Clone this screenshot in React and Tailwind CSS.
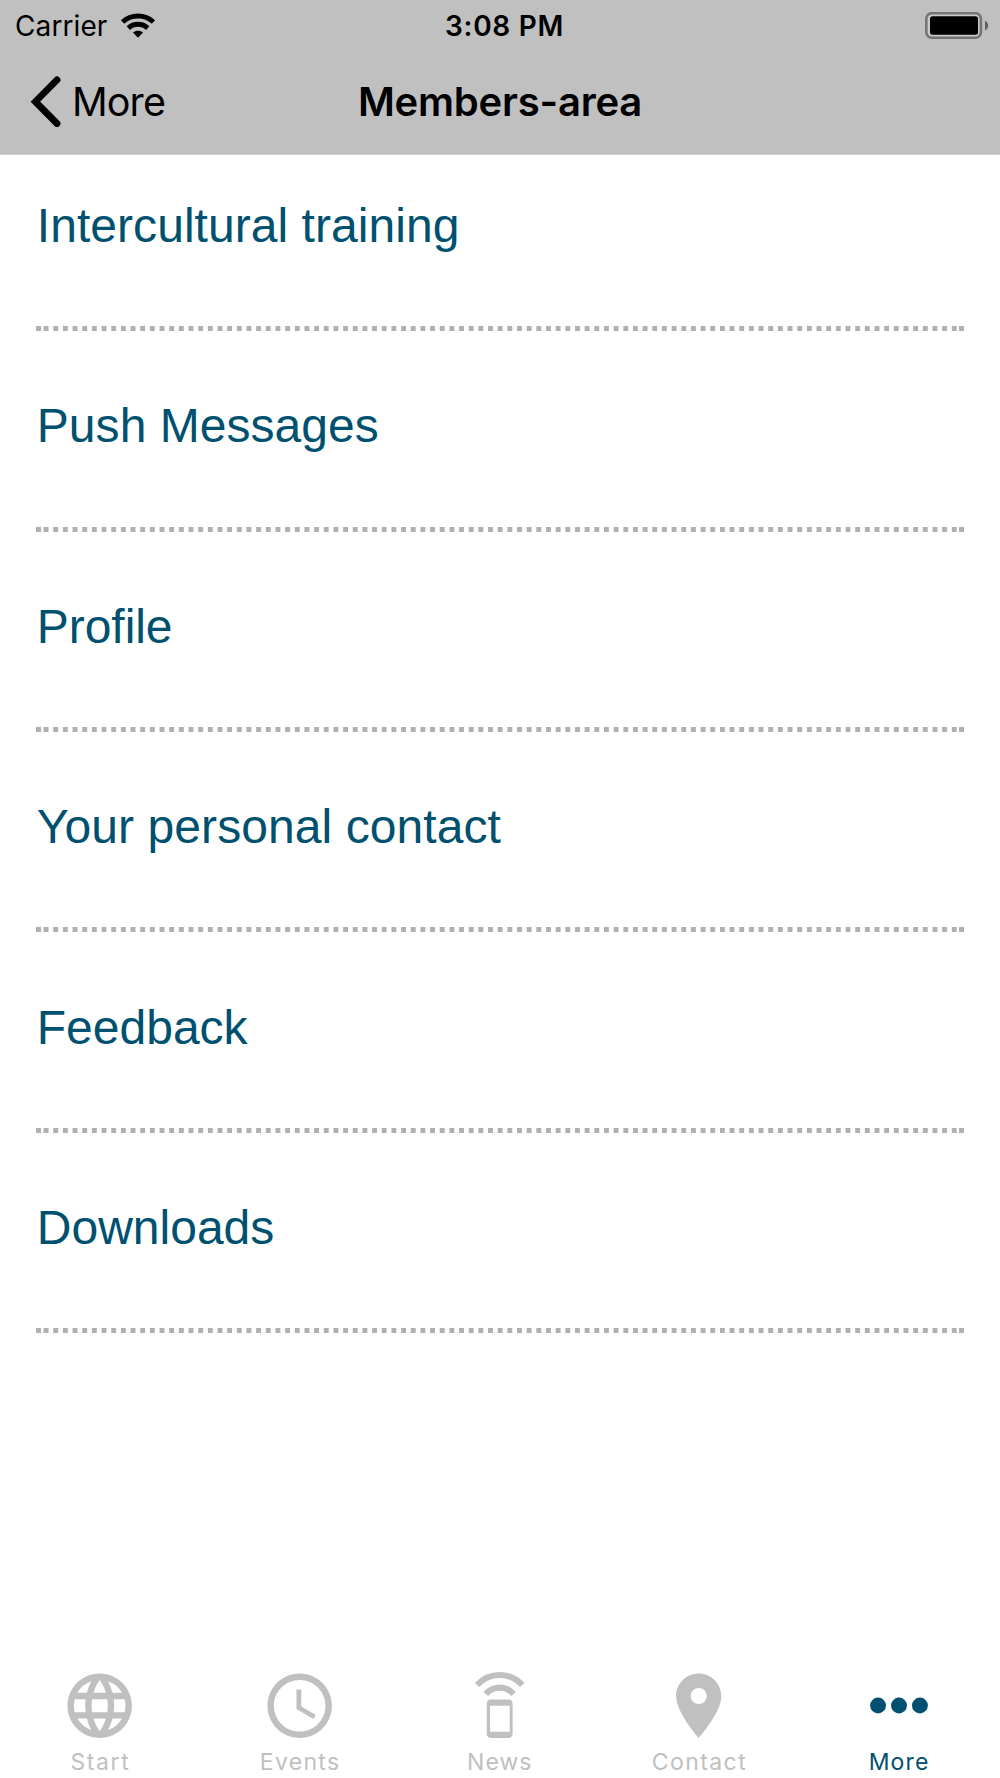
import React from "react";
import { MdLanguage, MdSchedule, MdPlace } from "react-icons/md";

const ITEMS = [
  { label: "Intercultural training", tracking: "tracking-[0.05px]" },
  { label: "Push Messages", tracking: "tracking-[0.04px]" },
  { label: "Profile", tracking: "tracking-[-0.05px]" },
  { label: "Your personal contact", tracking: "tracking-[0.08px]" },
  { label: "Feedback", tracking: "tracking-normal" },
  { label: "Downloads", tracking: "tracking-normal" },
];

const MoreDots = ({ className }) => (
  <svg className={className} viewBox="0 0 78 78" fill="currentColor">
    <circle cx="18.2" cy="38.8" r="8" />
    <circle cx="39.3" cy="38.8" r="8" />
    <circle cx="60.4" cy="38.8" r="8" />
  </svg>
);

const PhoneSignal = ({ className }) => (
  <svg className={className} viewBox="0 0 24 24" fill="none" stroke="currentColor" strokeWidth="1.9">
    <path d="M5 5.6A9.45 9.45 0 0 1 19 5.6" />
    <path d="M7.7 8.4A5.6 5.6 0 0 1 16.3 8.4" />
    <path
      d="M9.2 10.1H14.8C15.5 10.1 16 10.6 16 11.3V20.8C16 21.5 15.5 22 14.8 22H9.2C8.5 22 8 21.5 8 20.8V11.3C8 10.6 8.5 10.1 9.2 10.1ZM9 12V20.1H15.1V12Z"
      fill="currentColor"
      fillRule="evenodd"
      stroke="none"
    />
  </svg>
);

const TABS = [
  { label: "Start", Icon: MdLanguage, tracking: "tracking-[1.6px]" },
  { label: "Events", Icon: MdSchedule, tracking: "tracking-[1.3px]" },
  { label: "News", Icon: PhoneSignal, tracking: "tracking-[1px]" },
  { label: "Contact", Icon: MdPlace, tracking: "tracking-[1.4px]" },
  { label: "More", Icon: MoreDots, tracking: "tracking-[1.2px]", active: true },
];

const Wifi = () => (
  <svg className="h-[26px] w-[36px]" viewBox="0 0 36 26" fill="none" stroke="#000" strokeWidth="4.9">
    <path d="M2.6 9C11 1 25 1 33.4 9" />
    <path d="M8.3 15.1C13.8 10 22.2 10 27.7 15.1" />
    <path d="M13 19.6C15.8 17 20.2 17 23 19.6L18 24.7Z" fill="#000" stroke="none" />
  </svg>
);

const Battery = () => (
  <svg className="h-[28px] w-[64px]" viewBox="0 0 64 28">
    <rect x="1.3" y="1.2" width="54.6" height="24.6" rx="5.5" fill="#c9c9c9" stroke="#747474" strokeWidth="2.6" />
    <rect x="5" y="4.3" width="48" height="18.4" rx="2.5" fill="#000" />
    <path d="M60 8.7C64.2 10.5 64.2 16.5 60 18.3Z" fill="#606060" />
  </svg>
);

const Divider = () => (
  <svg className="block h-[5px] w-[928px]" viewBox="0 0 928 5" stroke="#b0b0b0" strokeWidth="5">
    <path d="M0 2.5H5" />
    <path d="M7.6 2.5H920.7" strokeDasharray="4.9 4.762" />
    <path d="M923 2.5H928" />
  </svg>
);

export default function App() {
  return (
    <div className="flex h-[1778px] w-[1000px] flex-col overflow-hidden bg-white font-['Inter',sans-serif] text-black">
      <header className="h-[155px] border-b border-[#d0d0d0] bg-[#c0c0c0]">
        <div className="grid h-[50px] grid-cols-3 items-center">
          <div className="flex items-center gap-[12.6px] pl-[15px]">
            <span className="pt-px text-[28px] leading-[50px] tracking-[0.1px]">Carrier</span>
            <Wifi />
          </div>
          <div className="pt-px pl-[9px] text-center text-[28px] leading-[50px] font-semibold tracking-[0.7px]">3:08 PM</div>
          <div className="flex justify-end pr-[11px]">
            <Battery />
          </div>
        </div>
        <div className="grid h-[104px] grid-cols-3 items-center">
          <div className="flex items-center gap-[11px] pl-[29px]">
            <svg className="h-[54px] w-[32px]" viewBox="0 0 32 54" fill="none" stroke="#000" strokeWidth="6.8" strokeLinecap="round">
              <path d="M28 4.9L6.4 26.7L28 48.5" />
            </svg>
            <span className="text-[39.5px] leading-[104px] tracking-[-0.9px]">More</span>
          </div>
          <h1 className="text-center text-[40px] leading-[104px] font-semibold tracking-[-0.2px] whitespace-nowrap">Members-area</h1>
        </div>
      </header>

      <ul className="flex-1 pt-[11px] pl-[36px]">
        {ITEMS.map(({ label, tracking }) => (
          <li key={label} className="flex h-[200.4px] flex-col">
            <div className={`h-[160.3px] pt-[30px] pl-[0.8px] font-['Liberation_Sans',sans-serif] text-[48px] leading-[60px] text-[#00506f] ${tracking}`}>
              {label}
            </div>
            <Divider />
          </li>
        ))}
      </ul>

      <nav className="flex h-[111.5px] w-[998.5px]">
        {TABS.map(({ label, Icon, tracking, active }) => (
          <div key={label} className={`flex flex-1 flex-col items-center ${active ? "text-[#00506f]" : "text-[#c0c0c0]"}`}>
            <Icon className="h-[77.4px] w-[77.4px] shrink-0" />
            <span className={`pt-px pl-px text-[23px] leading-[34px] font-normal ${tracking}`}>{label}</span>
          </div>
        ))}
      </nav>
    </div>
  );
}
